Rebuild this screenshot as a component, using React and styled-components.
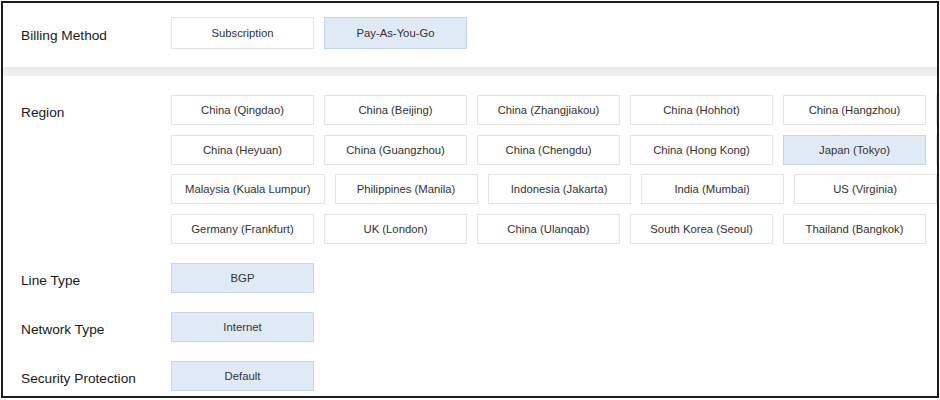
import React from "react"
import styled, { createGlobalStyle } from "styled-components"

const GlobalStyle = createGlobalStyle`
  html, body {
    margin: 0;
    padding: 0;
    background: #fff;
  }
  body {
    font-family: "Liberation Sans", Arial, Helvetica, sans-serif;
    color: #333;
  }
`

const Frame = styled.div`
  box-sizing: border-box;
  width: 938px;
  height: 397px;
  margin: 1px;
  border: 2px solid #1c1c1c;
  border-left-width: 2.5px;
  overflow: hidden;
  background: #fff;
`

const Top = styled.div`
  padding: 14px 0 18px 18px;
`

const Band = styled.div`
  height: 9px;
  background: linear-gradient(#e9e9e9, #f2f2f2);
`

const Body = styled.div`
  display: flex;
  flex-direction: column;
  gap: 19px;
  padding: 19px 0 0 18px;
`

const Row = styled.div`
  display: flex;
  align-items: flex-start;
`

// text sits a little below the middle of its row, as in the console
const Label = styled.div`
  flex: 0 0 150px;
  height: ${(p) => p.$h}px;
  line-height: ${(p) => p.$h + 5}px;
  font-size: 13.7px;
  color: #1a1a1a;
  white-space: nowrap;
`

const Options = styled.div`
  flex: 0 0 912px;
  display: flex;
  flex-wrap: wrap;
  column-gap: 10px;
  row-gap: 9.5px;
`

const Option = styled.div`
  box-sizing: border-box;
  min-width: 143px;
  height: ${(p) => p.$h}px;
  padding: 0 13px;
  display: flex;
  align-items: center;
  justify-content: center;
  font-size: 11.3px;
  color: #333;
  white-space: nowrap;
  background: ${(p) => (p.$active ? "#e0eaf7" : "#fff")};
  border: 1px solid ${(p) => (p.$active ? "#c4d6ee" : "#e4e4e4")};
`

const regions = [
  "China (Qingdao)",
  "China (Beijing)",
  "China (Zhangjiakou)",
  "China (Hohhot)",
  "China (Hangzhou)",
  "China (Shanghai)",
  "China (Heyuan)",
  "China (Guangzhou)",
  "China (Chengdu)",
  "China (Hong Kong)",
  "Japan (Tokyo)",
  "Singapore",
  "Malaysia (Kuala Lumpur)",
  "Philippines (Manila)",
  "Indonesia (Jakarta)",
  "India (Mumbai)",
  "US (Virginia)",
  "Germany (Frankfurt)",
  "UK (London)",
  "China (Ulanqab)",
  "South Korea (Seoul)",
  "Thailand (Bangkok)",
]

const singles = [
  ["Line Type", "BGP"],
  ["Network Type", "Internet"],
  ["Security Protection", "Default"],
]

const App = () => (
  <>
    <GlobalStyle />
    <Frame>
      <Top>
        <Row>
          <Label $h={32}>Billing Method</Label>
          <Options>
            <Option $h={32}>Subscription</Option>
            <Option $h={32} $active>Pay-As-You-Go</Option>
          </Options>
        </Row>
      </Top>
      <Band />
      <Body>
        <Row>
          <Label $h={30}>Region</Label>
          <Options>
            {regions.map((r) => (
              <Option key={r} $h={30} $active={r === "Japan (Tokyo)"}>
                {r}
              </Option>
            ))}
          </Options>
        </Row>
        {singles.map(([label, value]) => (
          <Row key={label}>
            <Label $h={30}>{label}</Label>
            <Options>
              <Option $h={30} $active>{value}</Option>
            </Options>
          </Row>
        ))}
      </Body>
    </Frame>
  </>
)

export default App
